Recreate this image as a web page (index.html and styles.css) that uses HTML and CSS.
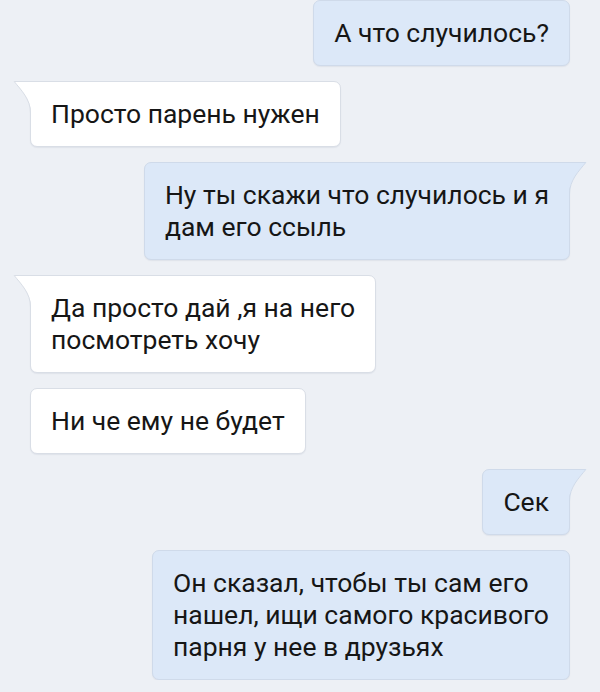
FILE: index.html
```html
<!DOCTYPE html>
<html lang="ru">
<head>
    <meta charset="UTF-8">
    <meta name="viewport" content="width=device-width, initial-scale=1.0">
    <title>Диалог</title>
    <link rel="stylesheet" href="styles.css">
</head>
<body>
    <div class="chat">
        <div class="msg out">А что случилось?</div>
        <div class="msg in has-tail">
            <svg class="tail" viewBox="0 0 19 32" width="19" height="32"><path class="tail-fill" d="M19 0 H1 C8 9 18 18 18 32 H19 Z"/><path class="tail-line" d="M19 0.5 H1.2 C8 9 17.5 18 17.5 32"/></svg>
            Просто парень нужен
        </div>
        <div class="msg out has-tail">
            <svg class="tail" viewBox="0 0 19 32" width="19" height="32"><path class="tail-fill" d="M19 0 H1 C8 9 18 18 18 32 H19 Z"/><path class="tail-line" d="M19 0.5 H1.2 C8 9 17.5 18 17.5 32"/></svg>
            Ну ты скажи что случилось и я<br>дам его ссыль
        </div>
        <div class="msg in has-tail">
            <svg class="tail" viewBox="0 0 19 32" width="19" height="32"><path class="tail-fill" d="M19 0 H1 C8 9 18 18 18 32 H19 Z"/><path class="tail-line" d="M19 0.5 H1.2 C8 9 17.5 18 17.5 32"/></svg>
            Да просто дай ,я на него<br>посмотреть хочу
        </div>
        <div class="msg in">Ни че ему не будет</div>
        <div class="msg out has-tail">
            <svg class="tail" viewBox="0 0 19 32" width="19" height="32"><path class="tail-fill" d="M19 0 H1 C8 9 18 18 18 32 H19 Z"/><path class="tail-line" d="M19 0.5 H1.2 C8 9 17.5 18 17.5 32"/></svg>
            Сек
        </div>
        <div class="msg out">Он сказал, чтобы ты сам его<br>нашел, ищи самого красивого<br>парня у нее в друзьях</div>
    </div>
</body>
</html>
```

FILE: styles.css
```css
body {
    margin: 0;
    background: #edf0f5;
    font-family: Roboto, 'Noto Sans', sans-serif;
    color: #161616;
}

.chat {
    display: flex;
    flex-direction: column;
    gap: 15px;
    padding: 0 30px;
}

.msg {
    position: relative;
    padding: 16px 20px;
    font-size: 26.5px;
    line-height: 32px;
    border: 1px solid #d9dee6;
    border-radius: 7px;
    box-shadow: 0 1px 1px rgba(60, 80, 110, 0.08);
}

.in {
    align-self: flex-start;
    background: #fff;
}

.out {
    align-self: flex-end;
    background: #dce8f8;
    border-color: #cfdaea;
}

.tail {
    position: absolute;
    top: -1px;
}

.tail-line {
    fill: none;
    stroke: #d9dee6;
    stroke-width: 1;
}

.in .tail {
    left: -18px;
}

.in .tail-fill {
    fill: #fff;
}

.out .tail {
    right: -18px;
    transform: scaleX(-1);
}

.out .tail-fill {
    fill: #dce8f8;
}

.out .tail-line {
    stroke: #cfdaea;
}

.in.has-tail {
    border-top-left-radius: 0;
}

.out.has-tail {
    border-top-right-radius: 0;
}
```
